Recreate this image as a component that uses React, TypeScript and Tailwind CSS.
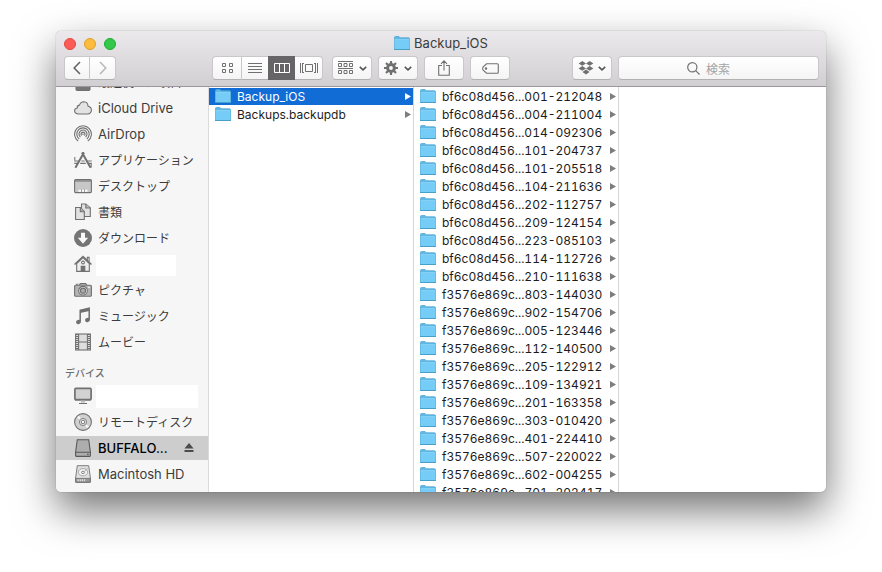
import type { ReactNode } from "react";

const GRAY = "#707070";

function Folder() {
  return (
    <svg className="h-[15px] w-4 shrink-0" viewBox="0 0 16 15" aria-hidden="true">
      <path d="M.5 1.5Q.5.5 1.5.5H5l1.2 1.3h8.3q1 0 1 1V13.2H.5Z" fill="#5fb9e4" stroke="#4fa8d3" strokeWidth=".8" />
      <path d="M.6 4h14.8v9H.6Z" fill="#75cdf7" />
      <path d="M.6 3.6h14.8" stroke="#93dafa" strokeWidth=".8" />
      <path d="M0 13.5h16" stroke="#48a0c9" strokeWidth="1" />
    </svg>
  );
}

function Icon({ children }: { children: ReactNode }) {
  return (
    <svg className="h-[18px] w-[18px] shrink-0" viewBox="0 0 18 18" fill="none" stroke={GRAY} strokeWidth="1.1" aria-hidden="true">
      {children}
    </svg>
  );
}

const icons = {
  recents: (
    <Icon>
      <path d="M2 1h14v15.5l-1 1H3l-1-1Z" fill="#777" />
    </Icon>
  ),
  cloud: (
    <Icon>
      <path d="M4 15Q.6 14.6.6 11.8.7 9.5 3.2 9q-.2-2.7 2.3-2.9Q6.5 2.8 9.8 2.7q4 .2 4.3 4.5 3.3.7 3.3 3.9 0 3.5-3.4 3.9Z" fill="#e3e3e3" />
    </Icon>
  ),
  airdrop: (
    <Icon>
      <path d="M4.2 16.1A8.4 8.4 0 1 1 13.8 16.1" />
      <path d="M5.2 14A6.2 6.2 0 1 1 12.8 14" />
      <path d="M6.4 12.1A4 4 0 1 1 11.6 12.1" />
      <path d="M7.6 10.6A2 2 0 1 1 10.4 10.6" />
      <circle cx="9" cy="9.3" r=".8" fill={GRAY} stroke="none" />
    </Icon>
  ),
  apps: (
    <Icon>
      <path d="M8 1.5 14.5 13 16.6 16.8M10 1.5 3.5 13 1.4 16.8" strokeWidth="2" />
      <path d="M.3 10h4.3M7.4 10h3.2M13.4 10h4.3M.3 12.3h2.8M6.2 12.3h5.6M14.9 12.3h2.8" strokeWidth="1.2" />
      <path d="M.8 6v3.5M17.2 12.5v4" strokeWidth="1" />
    </Icon>
  ),
  desktop: (
    <Icon>
      <rect x=".6" y="2.6" width="16.8" height="13" rx="1" fill="#c7c7c7" />
      <path d="M1 4h16" />
      <path d="M4.5 14.8v-2h9v2Z" fill="#fff" stroke="none" />
      <path d="M7.5 12.5v2.4M10.5 12.5v2.4" strokeWidth=".7" />
    </Icon>
  ),
  documents: (
    <Icon>
      <path d="M7.5 1h4.3l4.5 3.8v8.7H7.5Z" fill="#e2e2e2" />
      <path d="M11.8 1v4h4.5" fill="#bbb" />
      <path d="M1.6 4.5h4.7l4 4v8H1.6Z" fill="#e2e2e2" />
      <path d="M6.3 4.5v4.2h4" fill="#aaa" />
    </Icon>
  ),
  downloads: (
    <Icon>
      <circle cx="9" cy="9" r="9" fill="#757575" stroke="none" />
      <path d="M7 3.8h4v5h3.2L9 14.7 3.8 8.8H7Z" fill="#f8f8f8" stroke="none" />
    </Icon>
  ),
  home: (
    <Icon>
      <path d="M2.7 8.5V16.4h12.6V8.5L9 2.6Z" fill="#eee" />
      <path d="M.5 9.5 9 1.5l8.5 8" strokeWidth="1.5" />
      <path d="M13.3 5V2.4h1.8v4.3" />
      <circle cx="9" cy="7.5" r="1.4" fill="#fff" />
      <path d="M7.2 16.4v-5h3.6v5Z" fill={GRAY} />
    </Icon>
  ),
  pictures: (
    <Icon>
      <rect x=".6" y="4.3" width="16.8" height="11" rx="1" fill="#b4b4b4" />
      <path d="M5.2 4.3 6.3 2.6h5.4l1.1 1.7M2 3.3h2.2" fill="#b4b4b4" />
      <circle cx="9" cy="9.7" r="4.3" fill="#eee" />
      <circle cx="9" cy="9.7" r="2.6" fill="#aaa" />
      <path d="M14 6.3h2" stroke="#fff" />
    </Icon>
  ),
  music: (
    <Icon>
      <path d="M6.2 14.6V3.4L15.2 1.3v11.2" strokeWidth="1.5" />
      <path d="M6.2 3 15.2 1v3L6.2 6Z" fill={GRAY} stroke="none" />
      <ellipse cx="4.5" cy="15" rx="2.5" ry="2" fill={GRAY} stroke="none" transform="rotate(-20 4.5 15)" />
      <ellipse cx="13.5" cy="13" rx="2.5" ry="2" fill={GRAY} stroke="none" transform="rotate(-20 13.5 13)" />
    </Icon>
  ),
  movies: (
    <Icon>
      <rect x="1.6" y="1" width="14.8" height="16" fill="#dedede" />
      <path d="M4.6 1v16M13.4 1v16M4.6 9h8.8" />
      <path d="M3 1v16M15 1v16" strokeWidth="2" strokeDasharray="1 1" />
    </Icon>
  ),
  computer: (
    <Icon>
      <rect x=".9" y="1.4" width="16.2" height="11.2" rx="1" fill="#d2d2d2" strokeWidth="1.7" />
      <path d="M1 12.7h16" strokeWidth="1.6" />
      <path d="M7 13.5h4v2H7Z" fill="#bbb" stroke="none" />
      <path d="M5 16.5h8" />
    </Icon>
  ),
  disc: (
    <Icon>
      <circle cx="9" cy="9" r="8.4" fill="#d0d0d0" />
      <path d="M9 9 3 4.5 5 2.7Zm0 0 6 4.5-2 1.8Z" fill="#f5f5f5" stroke="none" />
      <circle cx="9" cy="9" r="3.6" fill="#ddd" strokeWidth=".8" />
      <circle cx="9" cy="9" r="1.7" fill="#fff" strokeWidth=".9" />
    </Icon>
  ),
  external: (
    <Icon>
      <path d="M3.3.7h11.4l1.7 12.5v3.6q0 .6-.7.6H2.3q-.7 0-.7-.6v-3.6Z" fill="#adadad" stroke="#585858" />
      <path d="M1.7 13.3h14.6" stroke="#585858" />
      <path d="M13.2 15.3h1.4" stroke="#333" />
    </Icon>
  ),
  internal: (
    <Icon>
      <path d="M3.3.7h11.4l1.7 12.3v3.8q0 .6-.7.6H2.3q-.7 0-.7-.6V13Z" fill="#e0e0e0" strokeWidth=".9" />
      <path d="M1.7 13.4h14.6v3.8H1.7Z" fill="#999" strokeWidth=".9" />
      <path d="M3.5 15.3h7.8" stroke="#ddd" strokeWidth="2" strokeDasharray="1.3 .8" />
      <ellipse cx="9" cy="7.2" rx="4.6" ry="3.7" fill="#f2f2f2" stroke="#999" strokeWidth=".8" />
      <ellipse cx="9" cy="7.4" rx="1.5" ry="1.2" strokeWidth=".8" />
      <path d="m10.5 6.5 3-3.2" stroke="#999" strokeWidth=".8" />
    </Icon>
  ),
};

type Place = { icon: keyof typeof icons; label?: string; blank?: string; latin?: boolean; selected?: boolean };

const favorites: Place[] = [
  { icon: "recents", label: "最近使った項目" },
  { icon: "cloud", label: "iCloud Drive", latin: true },
  { icon: "airdrop", label: "AirDrop", latin: true },
  { icon: "apps", label: "アプリケーション" },
  { icon: "desktop", label: "デスクトップ" },
  { icon: "documents", label: "書類" },
  { icon: "downloads", label: "ダウンロード" },
  { icon: "home", blank: "mt-0.5 h-[21px] w-20" },
  { icon: "pictures", label: "ピクチャ" },
  { icon: "music", label: "ミュージック" },
  { icon: "movies", label: "ムービー" },
];

const devices: Place[] = [
  { icon: "computer", blank: "h-[23px] w-[102px]" },
  { icon: "disc", label: "リモートディスク" },
  { icon: "external", label: "BUFFALO...", latin: true, selected: true },
  { icon: "internal", label: "Macintosh HD", latin: true },
];

function PlaceRow({ place }: { place: Place }) {
  return (
    <li className="flex h-[26px] shrink-0 items-center">
      <div className={`flex h-6 w-full items-center pl-[18px] pr-[14px] ${place.selected ? "bg-[#cdcdcd] font-medium text-black" : ""}`}>
        {icons[place.icon]}
        {place.blank ? (
          <span className={`ml-1 shrink-0 bg-white ${place.blank}`} />
        ) : (
          <span className={`ml-1.5 whitespace-nowrap pt-0.5 ${place.latin ? "text-[13px]" : "text-xs"}`}>{place.label}</span>
        )}
        {place.selected && (
          <button type="button" aria-label="取り出す" className="ml-auto">
            <svg className="h-[10px] w-[10px]" viewBox="0 0 10 10" fill="#4c4c4c" aria-hidden="true">
              <path d="m5 0 4.6 5.5H.4ZM.5 7h9v2H.5Z" />
            </svg>
          </button>
        )}
      </div>
    </li>
  );
}

const backups = [
  "bf6c08d456...001-212048",
  "bf6c08d456...004-211004",
  "bf6c08d456...014-092306",
  "bf6c08d456...101-204737",
  "bf6c08d456...101-205518",
  "bf6c08d456...104-211636",
  "bf6c08d456...202-112757",
  "bf6c08d456...209-124154",
  "bf6c08d456...223-085103",
  "bf6c08d456...114-112726",
  "bf6c08d456...210-111638",
  "f3576e869c...803-144030",
  "f3576e869c...902-154706",
  "f3576e869c...005-123446",
  "f3576e869c...112-140500",
  "f3576e869c...205-122912",
  "f3576e869c...109-134921",
  "f3576e869c...201-163358",
  "f3576e869c...303-010420",
  "f3576e869c...401-224410",
  "f3576e869c...507-220022",
  "f3576e869c...602-004255",
  "f3576e869c...701-202417",
];

function FileRow({ name, selected = false }: { name: string; selected?: boolean }) {
  return (
    <li className={`mb-px flex h-[17px] shrink-0 items-center pl-1.5 pr-0.5 ${selected ? "bg-[#116cd6] text-white" : "text-[#1c1c1c]"}`}>
      <Folder />
      <span className="ml-1.5 whitespace-nowrap text-[12px] leading-[17px] tabular-nums">{name}</span>
      <svg className="ml-auto h-[7px] w-[6px] shrink-0" viewBox="0 0 6 7" fill={selected ? "#fff" : "#7d7d7d"} aria-hidden="true">
        <path d="M0 0v7l6-3.5Z" />
      </svg>
    </li>
  );
}

const control = "flex h-6 items-center justify-center border border-[#c9c7c9] border-b-[#b3b1b3] bg-linear-to-b from-white to-[#f4f4f4]";

function Chevron() {
  return (
    <svg className="h-[5px] w-2" viewBox="0 0 8 5" fill="none" stroke="#555" strokeWidth="1.6" aria-hidden="true">
      <path d="m.8.8 3.2 3 3.2-3" />
    </svg>
  );
}

function Toolbar() {
  return (
    <div className="flex items-center pl-2 pr-[7px]">
      <button type="button" aria-label="戻る" className={`${control} w-[26px] rounded-l`}>
        <svg className="h-3.5 w-2" viewBox="0 0 8 14" fill="none" stroke="#646464" strokeWidth="1.6" aria-hidden="true">
          <path d="M7 1 1.2 7 7 13" />
        </svg>
      </button>
      <button type="button" aria-label="進む" className={`${control} w-[26px] rounded-r border-l-0`}>
        <svg className="h-3.5 w-2" viewBox="0 0 8 14" fill="none" stroke="#b9b9b9" strokeWidth="1.6" aria-hidden="true">
          <path d="m1 1 5.8 6L1 13" />
        </svg>
      </button>

      <div className="ml-24 flex">
        <button type="button" aria-label="アイコン" className={`${control} w-[30px] rounded-l`}>
          <svg className="h-[10px] w-[11px]" viewBox="0 0 11 10" fill="none" stroke={GRAY} aria-hidden="true">
            <path d="M.5.5h3v3h-3ZM7.5.5h3v3h-3ZM.5 6.5h3v3h-3ZM7.5 6.5h3v3h-3Z" />
          </svg>
        </button>
        <button type="button" aria-label="リスト" className={`${control} w-[26px] border-l-0 border-r-0`}>
          <svg className="h-[10px] w-[14px]" viewBox="0 0 14 10" stroke={GRAY} aria-hidden="true">
            <path d="M0 .5h14M0 3.5h14M0 6.5h14M0 9.5h14" />
          </svg>
        </button>
        <button type="button" aria-label="カラム" aria-pressed="true" className="flex h-6 w-[27px] items-center justify-center bg-[#666466]">
          <svg className="h-[10px] w-4" viewBox="0 0 16 10" fill="none" stroke="#fff" aria-hidden="true">
            <path d="M.5.5h15v9H.5ZM5.5.5v9M10.5.5v9" />
          </svg>
        </button>
        <button type="button" aria-label="Cover Flow" className={`${control} w-[28px] rounded-r border-l-0`}>
          <svg className="h-[10px] w-[18px]" viewBox="0 0 18 10" fill="none" stroke={GRAY} aria-hidden="true">
            <path d="M.5 0v10M2.5 0v10M2.5.5H4M2.5 9.5H4M17.5 0v10M15.5 0v10M15.5.5H14M15.5 9.5H14M5.5 1.5h7v7h-7Z" />
          </svg>
        </button>
      </div>

      <button type="button" aria-label="項目の並び順" className={`${control} ml-[9px] w-10 gap-1.5 rounded`}>
        <svg className="h-[14px] w-[15px]" viewBox="0 0 15 14" fill="none" stroke={GRAY} aria-hidden="true">
          <path d="M0 .5h15M0 7.5h15M.5 2.5h3v3h-3ZM6 2.5h3v3H6ZM11.5 2.5h3v3h-3ZM.5 9.5h3v3h-3ZM6 9.5h3v3H6ZM11.5 9.5h3v3h-3Z" />
        </svg>
        <Chevron />
      </button>
      <button type="button" aria-label="アクション" className={`${control} ml-[6px] w-10 gap-1.5 rounded`}>
        <svg className="h-[14px] w-[14px]" viewBox="-7 -7 14 14" fill="none" stroke={GRAY} aria-hidden="true">
          <circle r="3.4" strokeWidth="3" />
          <path d="M0-7v3M0 7V4M-7 0h3M7 0H4M-5-5l2 2M5 5 3 3M5-5 3-3M-5 5l2-2" strokeWidth="2.2" />
        </svg>
        <Chevron />
      </button>
      <button type="button" aria-label="共有" className={`${control} ml-[6px] w-10 rounded`}>
        <svg className="h-4 w-3" viewBox="0 0 12 16" fill="none" stroke={GRAY} strokeWidth="1.1" aria-hidden="true">
          <path d="M4 5.5H.7v9.8h10.6V5.5H8M6 10.5V1M3 3.8 6 .8l3 3" />
        </svg>
      </button>
      <button type="button" aria-label="タグ" className={`${control} ml-[6px] w-10 rounded`}>
        <svg className="h-[11px] w-[17px]" viewBox="0 0 17 11" fill="none" stroke={GRAY} strokeWidth="1.1" aria-hidden="true">
          <path d="M4.5.8h10.8q1 0 1 1v7.4q0 1-1 1H4.5L1 6.8Q.3 5.5 1 4.2Z" />
          <circle cx="4" cy="5.5" r=".7" />
        </svg>
      </button>

      <button type="button" aria-label="Dropbox" className={`${control} ml-auto w-10 gap-1 rounded`}>
        <svg className="h-[14px] w-4" viewBox="0 0 16 14" fill={GRAY} aria-hidden="true">
          <path d="M4.3 0 8 2.4 4.3 4.8.6 2.4ZM11.7 0l3.7 2.4-3.7 2.4L8 2.4ZM4.3 5 8 7.4 4.3 9.8.6 7.4ZM11.7 5l3.7 2.4-3.7 2.4L8 7.4ZM8 8.6l3.5 2.4L8 13.6 4.5 11Z" />
        </svg>
        <Chevron />
      </button>
      <label className={`${control} ml-[6px] w-[201px] gap-1.5 rounded pr-5`}>
        <svg className="h-[13px] w-[13px]" viewBox="0 0 13 13" fill="none" stroke={GRAY} strokeWidth="1.2" aria-hidden="true">
          <circle cx="5.3" cy="5.3" r="4.6" />
          <path d="m8.7 8.7 3.8 3.8" />
        </svg>
        <input type="search" aria-label="検索" placeholder="検索" className="field-sizing-content text-xs outline-none placeholder:text-[#a5a5a5]" />
      </label>
    </div>
  );
}

export default function App() {
  return (
    <div className="flex h-screen flex-col overflow-hidden bg-white px-14 pb-20 pt-[31px] font-['Inter','Noto_Sans_CJK_JP',sans-serif] text-[#3c3c3c]">
      <main className="flex min-h-0 flex-1 flex-col overflow-hidden rounded-[5px] bg-white shadow-[0_0_1px_rgba(0,0,0,0.5),0_18px_40px_rgba(0,0,0,0.55)]">
        <header className="flex h-14 shrink-0 flex-col border-b border-[#9c979d] bg-linear-to-b from-[#ebe9eb] to-[#d2cfd2]">
          <div className="grid h-[25px] grid-cols-[1fr_auto_1fr] items-center px-2">
            <div className="flex gap-2">
              <button type="button" aria-label="閉じる" className="size-3 rounded-full border border-[#e2463f] bg-[#fc5b57]" />
              <button type="button" aria-label="しまう" className="size-3 rounded-full border border-[#dfa023] bg-[#fdbc40]" />
              <button type="button" aria-label="拡大" className="size-3 rounded-full border border-[#1dac2c] bg-[#34c84a]" />
            </div>
            <h1 className="flex items-center gap-1 text-[13px]">
              <Folder />
              Backup_iOS
            </h1>
          </div>
          <Toolbar />
        </header>

        <div className="flex min-h-0 flex-1">
          <nav aria-label="サイドバー" className="flex w-[153px] shrink-0 flex-col justify-end overflow-hidden border-r border-[#dadada] bg-[#f6f6f6] pb-[5px]">
            <ul>
              {favorites.map((p) => (
                <PlaceRow key={p.icon} place={p} />
              ))}
            </ul>
            <h2 className="h-7 shrink-0 pl-[9px] pt-1 text-[10px] font-medium leading-7 text-[#6e6e6e]">デバイス</h2>
            <ul>
              {devices.map((p) => (
                <PlaceRow key={p.icon} place={p} />
              ))}
            </ul>
          </nav>
          <ul className="w-[205px] shrink-0 overflow-hidden border-r border-[#d5d5d5] pt-px">
            <FileRow name="Backup_iOS" selected />
            <FileRow name="Backups.backupdb" />
          </ul>
          <ul className="w-[205px] shrink-0 overflow-hidden border-r border-[#d5d5d5] pt-px">
            {backups.map((name) => (
              <FileRow key={name} name={name} />
            ))}
          </ul>
          <div className="flex-1" />
        </div>
      </main>
    </div>
  );
}
